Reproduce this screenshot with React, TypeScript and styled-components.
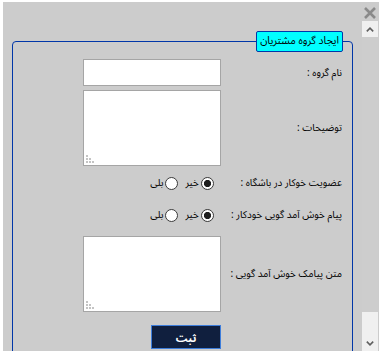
import React from 'react'
import styled, { createGlobalStyle } from 'styled-components'

const GlobalStyle = createGlobalStyle`
  html, body {
    margin: 0;
    padding: 0;
    background: #ffffff;
  }
  body {
    padding: 2px 3px;
    font-family: Tahoma, "Noto Sans Arabic", "DejaVu Sans", sans-serif;
    font-size: 10px;
    color: #000;
  }
`

const Dialog = styled.div`
  width: 376px;
  height: 349px;
  background: #cccccc;
  display: flex;
  overflow: hidden;
`

const Main = styled.div`
  width: 359px;
  padding-top: 29px;
  direction: rtl;
  overflow: hidden;
`

const Side = styled.div`
  width: 16px;
  display: flex;
  flex-direction: column;
`

const CloseBar = styled.div`
  height: 19px;
  display: flex;
  align-items: center;
  justify-content: center;
  padding-top: 2px;
  box-sizing: border-box;
  cursor: pointer;
`

const Track = styled.div`
  flex: 1;
  background: #f0f0f0;
  display: flex;
  flex-direction: column;
`

const ArrowButton = styled.div`
  height: 16px;
  display: flex;
  align-items: center;
  justify-content: center;
`

const Thumb = styled.div`
  height: 275px;
  background: #cdcdcd;
`

const TrackSpace = styled.div`
  flex: 1;
`

const Frame = styled.fieldset`
  margin: 0 9px;
  padding: 7px 10px 40px 0;
  border: 1px solid #0036a8;
  border-radius: 4px;
  min-width: 0;
`

const Legend = styled.legend`
  margin-right: -1px;
  padding: 3px 3px 3px;
  background: #00ffff;
  border: 1px solid #0036a8;
  border-radius: 2px;
  font-size: 10.5px;
  line-height: 13px;
`

const Row = styled.div<{ $gap?: number; $h?: number }>`
  display: grid;
  grid-template-columns: 121px 138px;
  align-items: center;
  line-height: 14px;
  margin-top: ${p => p.$gap ?? 0}px;
  height: ${p => (p.$h ? `${p.$h}px` : 'auto')};
`

const Label = styled.label`
  text-align: right;
  white-space: nowrap;
`

const TextInput = styled.input`
  box-sizing: border-box;
  width: 138px;
  height: 27px;
  margin: 0;
  border: 1px solid #a5a5a5;
  background: #fff;
  outline: none;
  font: inherit;
`

const AreaWrap = styled.div`
  position: relative;
  width: 138px;
  height: 76px;
`

const TextArea = styled.textarea`
  box-sizing: border-box;
  display: block;
  width: 100%;
  height: 100%;
  margin: 0;
  border: 1px solid #a5a5a5;
  background: #fff;
  resize: none;
  outline: none;
  font: inherit;
`

const Grip = styled.svg`
  position: absolute;
  left: 3px;
  bottom: 3px;
`

const Options = styled.div`
  display: flex;
  align-items: center;
  gap: 7px;
  padding-right: 7px;
`

const Option = styled.label`
  display: flex;
  align-items: center;
  gap: 2px;
`

const Radio = styled.input`
  appearance: none;
  width: 13px;
  height: 13px;
  margin: 0;
  border: 1px solid #3a3a3a;
  border-radius: 50%;
  background: #fff;
  box-sizing: border-box;

  &:checked {
    background: radial-gradient(circle, #1f1f1f 0 3.3px, #ffffff 3.9px);
  }
`

const Submit = styled.button`
  width: 70px;
  height: 24px;
  margin: 0;
  background: #101f3e;
  border: 1px solid #3d7ddb;
  color: #fff;
  font: bold 11px Tahoma, "Noto Sans Arabic", "DejaVu Sans", sans-serif;
  cursor: pointer;
`

const ResizeGrip = () => (
  <Grip width="9" height="8" viewBox="0 0 9 8">
    <rect x="0" y="0" width="2" height="2" fill="#c4c4c4" />
    <rect x="0" y="3" width="2" height="2" fill="#c4c4c4" />
    <rect x="3" y="3" width="2" height="2" fill="#c4c4c4" />
    <rect x="0" y="6" width="2" height="2" fill="#c4c4c4" />
    <rect x="3" y="6" width="2" height="2" fill="#c4c4c4" />
    <rect x="6" y="6" width="2" height="2" fill="#c4c4c4" />
  </Grip>
)

const Area = () => (
  <AreaWrap>
    <TextArea />
    <ResizeGrip />
  </AreaWrap>
)

const YesNo = ({ name }: { name: string }) => (
  <Options>
    <Option>
      <Radio type="radio" name={name} defaultChecked />
      خیر
    </Option>
    <Option>
      <Radio type="radio" name={name} />
      بلی
    </Option>
  </Options>
)

export default function App() {
  return (
    <>
      <GlobalStyle />
      <Dialog>
        <Main>
          <Frame>
            <Legend>ایجاد گروه مشتریان</Legend>
            <Row>
              <Label>نام گروه :</Label>
              <TextInput type="text" />
            </Row>
            <Row $gap={4}>
              <Label>توضیحات :</Label>
              <Area />
            </Row>
            <Row $gap={7} $h={20}>
              <Label>عضویت خوکار در باشگاه :</Label>
              <YesNo name="club" />
            </Row>
            <Row $gap={12} $h={20}>
              <Label>پیام خوش آمد گویی خودکار :</Label>
              <YesNo name="welcome" />
            </Row>
            <Row $gap={11}>
              <Label>متن پیامک خوش آمد گویی :</Label>
              <Area />
            </Row>
            <Row $gap={13}>
              <span />
              <Submit type="button">ثبت</Submit>
            </Row>
          </Frame>
        </Main>
        <Side>
          <CloseBar>
            <svg width="14" height="12" viewBox="0 0 14 12">
              <path d="M2 1 L12 11 M12 1 L2 11" stroke="#8a8a8a" strokeWidth="2.6" />
            </svg>
          </CloseBar>
          <Track>
            <ArrowButton>
              <svg width="8" height="5" viewBox="0 0 8 5">
                <path d="M0.8 4.4 L4 1.2 L7.2 4.4" fill="none" stroke="#606060" strokeWidth="1.6" />
              </svg>
            </ArrowButton>
            <Thumb />
            <TrackSpace />
            <ArrowButton>
              <svg width="8" height="5" viewBox="0 0 8 5">
                <path d="M0.8 0.6 L4 3.8 L7.2 0.6" fill="none" stroke="#606060" strokeWidth="1.6" />
              </svg>
            </ArrowButton>
          </Track>
        </Side>
      </Dialog>
    </>
  )
}
